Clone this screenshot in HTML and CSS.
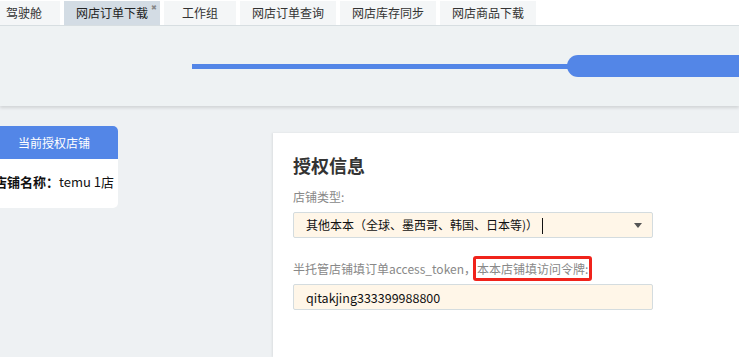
FILE: index.html
```html
<!DOCTYPE html>
<html>
<head>
    <meta charset="utf-8">
    <title>网店订单下载</title>
    <link rel="stylesheet" href="styles.css">
</head>
<body>
    <div class="tabs">
        <div class="tab">驾驶舱</div>
        <div class="tab active">网店订单下载<span class="close">✖</span></div>
        <div class="tab">工作组</div>
        <div class="tab">网店订单查询</div>
        <div class="tab">网店库存同步</div>
        <div class="tab">网店商品下载</div>
    </div>

    <div class="header">
        <div class="track"></div>
        <div class="pill"></div>
    </div>

    <div class="content">
        <div class="shop-card">
            <div class="shop-head">当前授权店铺</div>
            <div class="shop-body"><b>店铺名称：</b>temu 1店</div>
        </div>

        <div class="auth-card">
            <h2>授权信息</h2>
            <div class="label">店铺类型:</div>
            <div class="select">
                <span>其他本本（全球、墨西哥、韩国、日本等)）<i class="cursor"></i></span>
                <span class="arrow"></span>
            </div>
            <div class="label second">半托管店铺填订单access_token，<span class="mark">本本店铺填访问令牌:</span></div>
            <div class="input">qitakjing333399988800</div>
        </div>
    </div>
</body>
</html>
```

FILE: styles.css
```css
body {
    margin: 0;
    background: #eef1f3;
    font-family: "Noto Sans CJK SC", "Noto Sans", sans-serif;
    font-size: 12px;
    color: #222;
    overflow: hidden;
    height: 357px;
}
.tabs {
    display: flex;
    gap: 4px;
    height: 26px;
    padding-top: 1px;
    margin-left: -12px;
    background: #fff;
    border-bottom: 1px solid #d8dfe2;
    box-sizing: border-box;
}
.tab {
    position: relative;
    min-width: 72px;
    padding: 0 12px;
    box-sizing: border-box;
    text-align: center;
    font-size: 12px;
    line-height: 24px;
    color: #333;
    background: #f4f6f7;
}
.tab.active {
    background: #d3dce4;
    color: #222;
}
.close {
    position: absolute;
    top: 2px;
    right: 3px;
    font-size: 7px;
    line-height: 8px;
    color: #888;
}
.header {
    display: flex;
    align-items: center;
    height: 80px;
    padding-left: 192px;
    background: #eef2f3;
    box-shadow: 0 2px 3px rgba(0, 0, 0, 0.12);
}
.track {
    width: 380px;
    height: 5px;
    background: #5386e7;
}
.pill {
    flex: 1;
    height: 22px;
    margin-left: -5px;
    border-radius: 11px 0 0 11px;
    background: #5386e7;
}
.content {
    display: flex;
    align-items: flex-start;
}
.shop-card {
    width: 128px;
    margin: 20px 0 0 -10px;
    background: #fff;
    border-radius: 5px;
    overflow: hidden;
}
.shop-head {
    height: 33px;
    line-height: 33px;
    text-align: center;
    font-size: 12px;
    color: #fff;
    background: #5386e7;
}
.shop-body {
    height: 49px;
    line-height: 46px;
    text-align: center;
    font-size: 13px;
    color: #111;
    white-space: nowrap;
}
.auth-card {
    flex: 1;
    height: 188px;
    margin: 27px 0 0 155px;
    padding: 18px 20px;
    background: #fff;
    box-shadow: -1px 0 2px rgba(0, 0, 0, 0.08);
}
h2 {
    margin: 0 0 8px;
    font-size: 18px;
    line-height: 28px;
    color: #333;
}
.label {
    color: #888;
    line-height: 20px;
    margin-bottom: 5px;
}
.label.second {
    margin-top: 21px;
}
.mark {
    padding: 1px 1px;
    margin-left: -3px;
    border: 3px solid #f0231b;
    border-radius: 3px;
}
.select, .input {
    display: flex;
    align-items: center;
    justify-content: space-between;
    width: 360px;
    height: 26px;
    box-sizing: border-box;
    padding: 0 10px 0 12px;
    background: #fff6e8;
    border: 1px solid #d4dcdf;
    border-radius: 2px;
    color: #111;
}
.input {
    font-size: 12.5px;
}
.cursor {
    display: inline-block;
    width: 1px;
    height: 16px;
    margin-left: 4px;
    vertical-align: middle;
    background: #111;
}
.arrow {
    width: 0;
    height: 0;
    border-left: 4px solid transparent;
    border-right: 4px solid transparent;
    border-top: 5px solid #555;
}
```
